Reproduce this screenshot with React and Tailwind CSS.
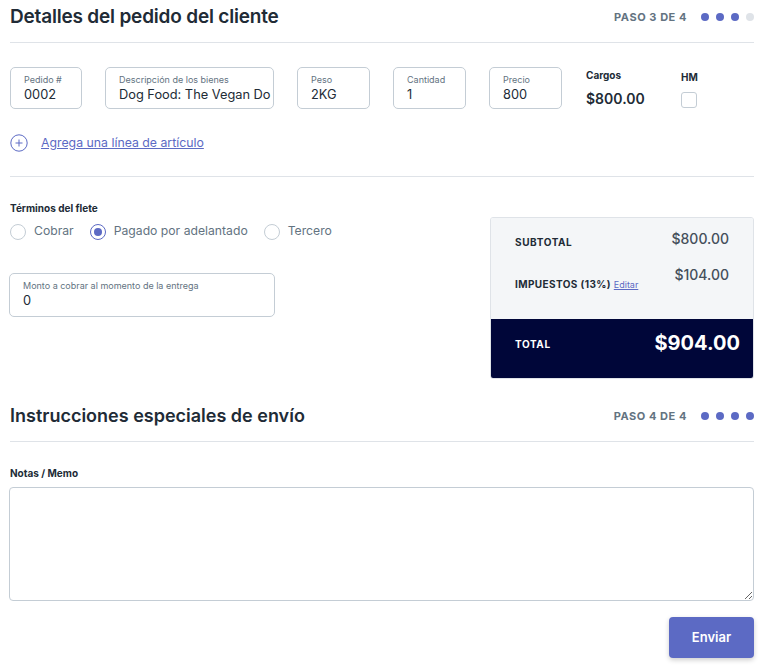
import React, { useState } from 'react';

const Dots = ({ active }) => (
  <div className="flex items-center gap-[7px]">
    {[0, 1, 2, 3].map((i) => (
      <span
        key={i}
        className={`block h-[8px] w-[8px] rounded-full ${i < active ? 'bg-[#5c6ac4]' : 'bg-[#dfe3e8]'}`}
      />
    ))}
  </div>
);

const SectionHeader = ({ title, step, active, size }) => (
  <div className="mr-6 flex h-[42px] items-center justify-between border-b border-[#dfe3e8]">
    <h2 className={`${size} font-semibold text-[#212b36] leading-none pb-[10px]`}>{title}</h2>
    <div className="flex items-center gap-[14px] pb-[9px]">
      <span className="text-[11px] font-bold tracking-[0.05em] text-[#637381]">{step}</span>
      <Dots active={active} />
    </div>
  </div>
);

const Field = ({ label, value, width }) => (
  <div className={`${width} h-[42px] rounded-[5px] border border-[#c4cdd5] pl-[13px] pr-[2px] pt-[6px]`}>
    <div className="text-[9px] leading-[12px] text-[#637381]">{label}</div>
    <div className="text-[12.8px] leading-[18px] text-[#212b36] whitespace-nowrap overflow-hidden">{value}</div>
  </div>
);

const Radio = ({ checked, label }) => (
  <label className="flex items-center gap-[8px]">
    <span
      className={`flex h-[16px] w-[16px] items-center justify-center rounded-full border ${checked ? 'border-[#5c6ac4]' : 'border-[#c4cdd5]'}`}
    >
      {checked && <span className="block h-[8px] w-[8px] rounded-full bg-[#5c6ac4]" />}
    </span>
    <span className="text-[12.2px] text-[#637381]">{label}</span>
  </label>
);

export default function App() {
  const [notes, setNotes] = useState('');

  return (
    <div className="min-h-screen bg-white font-['Inter',sans-serif] pl-[10px] pt-[1px]">
      <SectionHeader
        title="Detalles del pedido del cliente"
        step="PASO 3 DE 4"
        active={3}
        size="text-[19px] tracking-[-0.01em]"
      />

      {/* line items */}
      <div className="flex items-start gap-[23px] pt-[24px]">
        <Field label="Pedido #" value="0002" width="w-[72px]" />
        <Field label="Descripción de los bienes" value="Dog Food: The Vegan Do" width="w-[169px]" />
        <Field label="Peso" value="2KG" width="w-[73px]" />
        <Field label="Cantidad" value="1" width="w-[73px]" />
        <Field label="Precio" value="800" width="w-[73px]" />
        <div className="w-[73px] pl-[1px]">
          <div className="text-[10px] font-bold text-[#212b36] leading-[14px] pt-[1px]">Cargos</div>
          <div className="text-[14px] font-semibold text-[#212b36] pt-[6px]">$800.00</div>
        </div>
        <div>
          <div className="text-[10px] font-bold text-[#212b36] leading-[14px] pt-[3px]">HM</div>
          <span className="mt-[8px] block h-[16px] w-[16px] rounded-[3px] border border-[#c4cdd5]" />
        </div>
      </div>

      <div className="mr-6 flex items-center gap-[13px] border-b border-[#dfe3e8] pt-[25px] pb-[24px]">
        <svg width="18" height="18" viewBox="0 0 18 18" fill="none" stroke="#5c6ac4" strokeWidth="1">
          <circle cx="9" cy="9" r="8.2" />
          <path d="M9 5.5v7M5.5 9h7" />
        </svg>
        <a href="#" className="text-[12.3px] text-[#5c6ac4] underline">Agrega una línea de artículo</a>
      </div>

      {/* freight terms + summary */}
      <div className="flex justify-between pr-6 pt-[24px]">
        <div>
          <div className="text-[10px] font-bold text-[#212b36]">Términos del flete</div>
          <div className="flex items-center gap-[16px] pt-[6px]">
            <Radio label="Cobrar" />
            <Radio label="Pagado por adelantado" checked />
            <Radio label="Tercero" />
          </div>
          <div className="-ml-[1px] pt-[32px]">
            <Field label="Monto a cobrar al momento de la entrega" value="0" width="w-[266px] h-[44px]" />
          </div>
        </div>

        <div className="mt-[16px] w-[264px] overflow-hidden rounded-[3px] border border-[#dfe3e8]">
          <div className="h-[101px] bg-[#f4f6f8] px-[24px] pt-[10px]">
            <div className="flex items-start justify-between">
              <span className="pt-[7px] text-[10px] font-bold tracking-[0.06em] text-[#212b36]">SUBTOTAL</span>
              <span className="text-[14px] font-medium text-[#454f5b]">$800.00</span>
            </div>
            <div className="flex items-start justify-between pt-[14px]">
              <span className="pt-[13px] text-[10px] font-bold tracking-[0.04em] text-[#212b36]">
                IMPUESTOS (13%){' '}
                <a href="#" className="text-[9px] font-normal tracking-normal text-[#5c6ac4] underline">Editar</a>
              </span>
              <span className="text-[14px] font-medium text-[#454f5b]">$104.00</span>
            </div>
          </div>
          <div className="flex h-[59px] items-center justify-between bg-[#000639] pb-[12px] pl-[24px] pr-[13px]">
            <span className="pt-[4px] text-[10px] font-bold tracking-[0.06em] text-white">TOTAL</span>
            <span className="text-[20px] font-bold text-white">$904.00</span>
          </div>
        </div>
      </div>

      {/* special instructions */}
      <div className="pt-[21px]">
        <SectionHeader title="Instrucciones especiales de envío" step="PASO 4 DE 4" active={4} size="text-[18px]" />
      </div>

      <div className="pr-6 pt-[24px]">
        <div className="text-[10px] font-bold text-[#212b36]">Notas / Memo</div>
        <textarea
          value={notes}
          onChange={(e) => setNotes(e.target.value)}
          className="-ml-[1px] mt-[6px] block h-[114px] w-[calc(100%+1px)] rounded-[4px] border border-[#c4cdd5] p-2 text-[14px] outline-none"
        />
        <div className="flex justify-end pt-[16px]">
          <button className="h-[41px] w-[85px] rounded-[4px] bg-[#5c6ac4] text-[13px] font-semibold text-white shadow-[0_2px_5px_rgba(0,0,0,0.2)]">
            Enviar
          </button>
        </div>
      </div>
    </div>
  );
}
